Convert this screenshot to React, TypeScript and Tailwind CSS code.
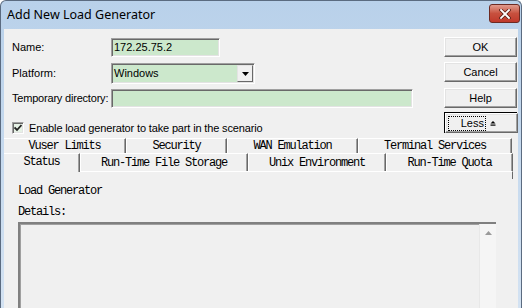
import React from 'react';

const sans = { fontFamily: '"Liberation Sans", Arial, sans-serif' };
const mono = { fontFamily: '"Liberation Mono", "Courier New", monospace' };

const Sunken: React.FC<{ className?: string; children?: React.ReactNode }> = ({ className = '', children }) => (
  <div
    className={`border border-t-[#a0a0a0] border-l-[#a0a0a0] border-r-white border-b-white shadow-[inset_1px_1px_0_#696969,inset_-1px_-1px_0_#e3e3e3] ${className}`}
  >
    {children}
  </div>
);

const Button: React.FC<{ label: string; className?: string; children?: React.ReactNode }> = ({ label, className = '', children }) => (
  <button
    className={`w-[73px] h-[20px] flex items-center justify-center bg-[#f0f0f0] border border-t-white border-l-white border-r-[#696969] border-b-[#696969] shadow-[inset_-1px_-1px_0_#a0a0a0,inset_1px_1px_0_#e3e3e3] text-[11px] text-black ${className}`}
    style={sans}
  >
    {children ?? label}
  </button>
);

const Tab: React.FC<{ label: string; w: number; first?: boolean; h: string }> = ({ label, w, first, h }) => (
  <div
    className={`${h} flex items-center justify-center border-t border-t-white border-r border-r-[#696969] shadow-[inset_-1px_0_0_#a0a0a0] ${first ? '' : 'border-l border-l-white'} text-[12px] tracking-[-1.2px] text-black`}
    style={{ ...mono, width: w }}
  >
    {label}
  </div>
);

export default function App() {
  return (
    <div className="w-[525px] h-[308px] bg-white overflow-hidden">
      <div className="w-[522px] h-[308px] flex flex-col rounded-t-[6px] border border-b-0 border-[#5b6b80] bg-gradient-to-b from-[#b9d1ea] to-[#d3e2f2]">
        {/* title bar */}
        <div className="h-[28px] shrink-0 flex items-center justify-between pl-[6px] pr-[1px]">
          <span className="text-[12.5px] text-black leading-none" style={{ fontFamily: '"Noto Sans", "Open Sans", sans-serif' }}>
            Add New Load Generator
          </span>
          <div className="self-start mt-[3px] w-[31px] h-[19px] rounded-[3px] border border-[#6d2a22] bg-gradient-to-b from-[#e09b8e] via-[#c7503e] to-[#c0392b] flex items-center justify-center">
            <svg width="12" height="10" viewBox="0 0 12 10">
              <path d="M2 1 L10 9 M10 1 L2 9" stroke="#5a1e16" strokeWidth="3.4" strokeLinecap="square" />
              <path d="M2 1 L10 9 M10 1 L2 9" stroke="#ffffff" strokeWidth="1.8" strokeLinecap="square" />
            </svg>
          </div>
        </div>

        {/* client area */}
        <div className="mx-[3px] flex-1 min-h-0 overflow-hidden bg-[#f0f0f0] flex flex-col" style={sans}>
          <div className="h-[109px] shrink-0 flex justify-between pl-[8px] pr-[1px]">
            <div className="flex flex-col pt-[9px] text-[11px] text-black">
              <div className="h-[19px] flex items-center">
                <span className="w-[99px]">Name:</span>
                <Sunken className="w-[109px] h-[19px] bg-[#cce8cc] flex items-center pl-[2px]">172.25.75.2</Sunken>
              </div>
              <div className="h-[21px] mt-[6px] flex items-center">
                <span className="w-[99px]">Platform:</span>
                <Sunken className="w-[144px] h-[21px] bg-[#cce8cc] flex items-center justify-between pl-[2px] pr-[1px]">
                  <span>Windows</span>
                  <div className="w-[16px] h-[17px] bg-[#f0f0f0] border border-t-[#e3e3e3] border-l-[#e3e3e3] border-r-[#696969] border-b-[#696969] flex items-center justify-center">
                    <svg width="7" height="4" viewBox="0 0 7 4">
                      <path d="M0 0 H7 L3.5 4 Z" fill="#000" />
                    </svg>
                  </div>
                </Sunken>
              </div>
              <div className="h-[19px] mt-[5px] flex items-center">
                <span className="w-[99px] tracking-[-0.2px]">Temporary directory:</span>
                <Sunken className="w-[302px] h-[19px] bg-[#cce8cc]" />
              </div>
              <div className="mt-[12px] flex items-center">
                <Sunken className="w-[12px] h-[12px] bg-[#e6f2e6] flex items-center justify-center">
                  <svg width="8" height="8" viewBox="0 0 8 8">
                    <path d="M0.5 3.5 L3 6 L7.5 1" stroke="#222" strokeWidth="1.8" fill="none" />
                  </svg>
                </Sunken>
                <span className="ml-[5px] tracking-[-0.15px]">Enable load generator to take part in the scenario</span>
              </div>
            </div>
            <div className="flex flex-col pt-[8px]">
              <Button label="OK" />
              <Button label="Cancel" className="mt-[5px]" />
              <Button label="Help" className="mt-[6px]" />
              <div className="mt-[4px] w-[73px] h-[21px] border border-black">
                <Button label="Less" className="w-[71px] h-[19px] !justify-start">
                  <span className="ml-[2px] w-[38px] pr-[1px] text-right border border-dotted border-black leading-[13px]">Less</span>
                  <svg width="6" height="6" viewBox="0 0 6 6" className="ml-[4px]">
                    <path d="M0.5 3.5 L3 1 L5.5 3.5 Z" fill="#000" />
                    <rect x="0.5" y="4.5" width="5" height="1.2" fill="#000" />
                  </svg>
                </Button>
              </div>
            </div>
          </div>

          {/* tabs */}
          <div className="flex shrink-0">
            <Tab label="Vuser Limits" w={122} first h="h-[15px]" />
            <Tab label="Security" w={101} h="h-[15px]" />
            <Tab label="WAN Emulation" w={131} h="h-[15px]" />
            <Tab label="Terminal Services" w={154} h="h-[15px]" />
          </div>
          <div className="flex shrink-0">
            <div
              className="w-[76px] h-[19px] pb-[2px] flex items-center justify-center border-t border-t-white border-r border-r-[#696969] shadow-[inset_-1px_0_0_#a0a0a0] text-[12px] tracking-[-1.2px]"
              style={mono}
            >
              Status
            </div>
            <div className="flex flex-col">
              <div className="flex">
                <Tab label="Run-Time File Storage" w={168} h="h-[18px]" />
                <Tab label="Unix Environment" w={138} h="h-[18px]" />
                <Tab label="Run-Time Quota" w={127} h="h-[18px]" />
              </div>
              <div className="h-[8px] w-[433px] border-t border-t-white border-r border-r-[#696969]" />
            </div>
          </div>

          {/* tab page */}
          <div className="pl-[14px] -mt-[7px] text-[12px] tracking-[-1.2px] text-black" style={mono}>
            <div className="h-[14px] mt-[12px] flex items-center">Load Generator</div>
            <div className="h-[14px] mt-[7px] flex items-center">Details:</div>
            <div className="mt-[3px] w-[478px] h-[100px] flex justify-end border-t-2 border-l-2 border-t-[#808080] border-l-[#808080] shadow-[inset_1px_1px_0_#a0a0a0]">
              <div className="w-[17px] h-full bg-[#f5f5f5] border-l border-l-[#e8e8e8] flex justify-center pt-[7px]">
                <svg width="7" height="4" viewBox="0 0 7 4">
                  <path d="M0 4 L3.5 0 L7 4 Z" fill="#9a9a9a" />
                </svg>
              </div>
            </div>
          </div>
        </div>
      </div>
    </div>
  );
}
